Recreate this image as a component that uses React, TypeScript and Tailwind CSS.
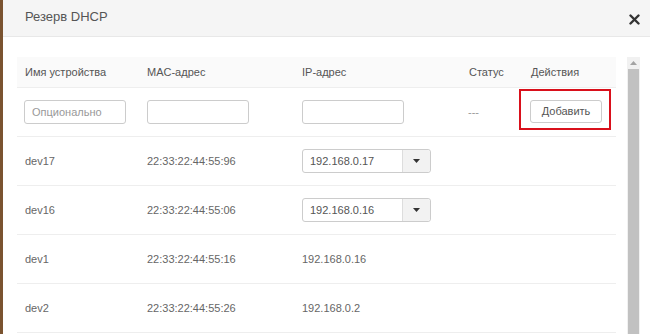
import React from 'react';

const rows = [
  { name: 'dev17', mac: '22:33:22:44:55:96', ip: '192.168.0.17', select: true },
  { name: 'dev16', mac: '22:33:22:44:55:06', ip: '192.168.0.16', select: true },
  { name: 'dev1', mac: '22:33:22:44:55:16', ip: '192.168.0.16', select: false },
  { name: 'dev2', mac: '22:33:22:44:55:26', ip: '192.168.0.2', select: false },
];

const grid = 'grid grid-cols-[122px_155px_167px_61px_1fr] items-center';

const IpSelect = ({ value }: { value: string }) => (
  <div className="flex h-[24px] w-[129px] rounded-[3px] border border-[#ccc] bg-white">
    <div className="flex flex-1 items-center pl-[7px] text-[11px] text-[#555]">{value}</div>
    <div className="flex w-[28px] items-center justify-center rounded-r-[3px] border-l border-[#ddd] bg-[#f2f2f2]">
      <svg width="7" height="4" viewBox="0 0 7 4">
        <path d="M0 0h7L3.5 4z" fill="#333" />
      </svg>
    </div>
  </div>
);

const App = () => {
  return (
    <div className="flex h-[334px] w-[650px] overflow-hidden bg-white font-['Liberation_Sans',Arial,sans-serif]">
      <div className="w-[3px] bg-[#7a5330]" />
      <div className="flex flex-1 flex-col">
        <div className="flex h-[37px] items-center justify-between border-b border-[#e8e8e8] bg-[#f5f5f5] pl-[22px] pr-[10px]">
          <span className="-mt-[2px] text-[13px] text-[#555]">Резерв DHCP</span>
          <svg width="11" height="11" viewBox="0 0 11 11" className="mt-[2px]">
            <path d="M1.5 1.5l8 8M9.5 1.5l-8 8" stroke="#333" strokeWidth="2.4" strokeLinecap="round" />
          </svg>
        </div>
        <div className="flex flex-1 pl-[14px] pt-[20px]">
          <div className="flex flex-1 flex-col text-[11px] text-[#666]">
            <div className={`${grid} h-[31px] border-b border-[#eee] bg-[#fafafa] text-[#555]`}>
              <span className="pl-[8px]">Имя устройства</span>
              <span className="pl-[8px]">MAC-адрес</span>
              <span className="pl-[8px]">IP-адрес</span>
              <span className="pl-[8px]">Статус</span>
              <span className="pl-[9px]">Действия</span>
            </div>
            <div className={`${grid} h-[49px] border-b border-[#eee]`}>
              <div className="pl-[7px]">
                <div className="flex h-[24px] w-[102px] items-center rounded-[3px] border border-[#ccc] pl-[7px] text-[11px] text-[#999]">
                  Опционально
                </div>
              </div>
              <div className="pl-[8px]">
                <div className="h-[24px] w-[102px] rounded-[3px] border border-[#ccc]" />
              </div>
              <div className="pl-[8px]">
                <div className="h-[24px] w-[102px] rounded-[3px] border border-[#ccc]" />
              </div>
              <span className="pl-[7px] text-[#999]">---</span>
              <div className="-mt-[5px]">
                <div className="-ml-[3px] inline-flex border-2 border-[#d9101b] pb-[5px] pl-[9px] pr-[7px] pt-[9px]">
                  <div className="flex h-[23px] w-[72px] items-center justify-center rounded-[3px] border border-[#ccc] bg-white text-[11px] text-[#555]">
                    Добавить
                  </div>
                </div>
              </div>
            </div>
            {rows.map((r) => (
              <div key={r.name} className={`${grid} h-[49px] border-b border-[#eee]`}>
                <span className="pl-[8px]">{r.name}</span>
                <span className="pl-[8px]">{r.mac}</span>
                <div className="pl-[8px]">
                  {r.select ? <IpSelect value={r.ip} /> : <span>{r.ip}</span>}
                </div>
                <span />
                <span />
              </div>
            ))}
          </div>
          <div className="ml-[11px] mr-[10px] flex w-[13px] flex-col bg-[#f1f1f1]">
            <div className="flex h-[12px] items-center justify-center">
              <svg width="7" height="4" viewBox="0 0 7 4">
                <path d="M0 4h7L3.5 0z" fill="#a3a3a3" />
              </svg>
            </div>
            <div className="mx-[1px] flex-1 bg-[#c1c1c1]" />
          </div>
        </div>
      </div>
    </div>
  );
};

export default App;
